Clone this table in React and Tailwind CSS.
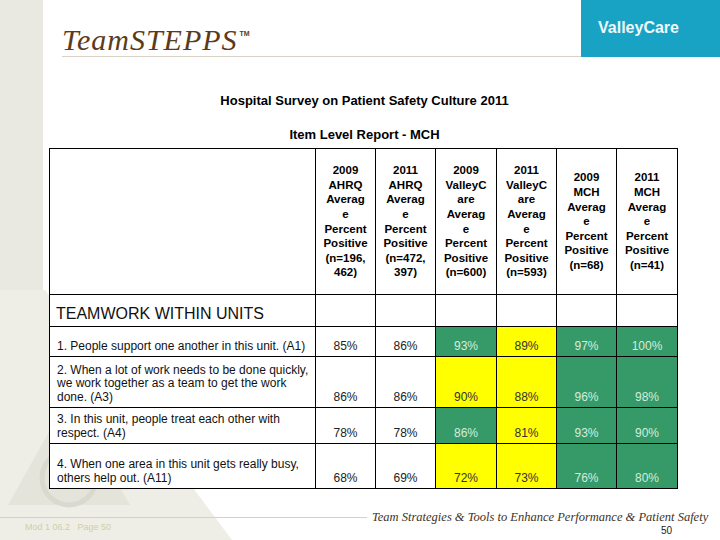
import React from 'react'

const heads = [
  ['2009', 'AHRQ', 'Averag', 'e', 'Percent', 'Positive', '(n=196,', '462)'],
  ['2011', 'AHRQ', 'Averag', 'e', 'Percent', 'Positive', '(n=472,', '397)'],
  ['2009', 'ValleyC', 'are', 'Averag', 'e', 'Percent', 'Positive', '(n=600)'],
  ['2011', 'ValleyC', 'are', 'Averag', 'e', 'Percent', 'Positive', '(n=593)'],
  ['2009', 'MCH', 'Averag', 'e', 'Percent', 'Positive', '(n=68)'],
  ['2011', 'MCH', 'Averag', 'e', 'Percent', 'Positive', '(n=41)'],
]

// w = white, g = green, y = yellow
const rows = [
  {
    h: 'h-[30px]',
    label: ['1. People support one another in this unit. (A1)'],
    vals: [['85%', 'w'], ['86%', 'w'], ['93%', 'g'], ['89%', 'y'], ['97%', 'g'], ['100%', 'g']],
  },
  {
    h: 'h-[51px]',
    label: ['2. When a lot of work needs to be done quickly,', 'we work together as a team to get the work', 'done. (A3)'],
    vals: [['86%', 'w'], ['86%', 'w'], ['90%', 'y'], ['88%', 'y'], ['96%', 'g'], ['98%', 'g']],
  },
  {
    h: 'h-[36px]',
    label: ['3. In this unit, people treat each other with', 'respect. (A4)'],
    vals: [['78%', 'w'], ['78%', 'w'], ['86%', 'g'], ['81%', 'y'], ['93%', 'g'], ['90%', 'g']],
  },
  {
    h: 'h-[45px]',
    label: ['4. When one area in this unit gets really busy,', 'others help out. (A11)'],
    vals: [['68%', 'w'], ['69%', 'w'], ['72%', 'y'], ['73%', 'y'], ['76%', 'g'], ['80%', 'g']],
  },
]

const cellTone = {
  w: 'bg-white text-[#222]',
  g: 'bg-[#359a68] text-[#d6ecdc]',
  y: 'bg-[#ffff00] text-[#333]',
}

function Backdrop() {
  return (
    <svg className="absolute inset-0" width="720" height="540" viewBox="0 0 720 540">
      <rect x="0" y="0" width="43" height="540" fill="#e9e9e1" />
      <polygon points="0,290 45,290 232,540 0,540" fill="#eeeee7" />
      <polygon points="68,398 8,505 130,505" fill="#e4e4db" />
      <circle cx="69" cy="478" r="27" fill="none" stroke="#d9d9d0" strokeWidth="5" />
      <rect x="57" y="440" width="24" height="14" fill="none" stroke="#d9d9d0" strokeWidth="1.5" />
    </svg>
  )
}

const App = () => {
  return (
    <div className="relative w-[720px] h-[540px] overflow-hidden bg-white font-['Liberation_Sans',Arial,sans-serif]">
      <Backdrop />

      <div className="relative flex flex-col">
        {/* header band */}
        <div className="flex h-[57px]">
          <div className="ml-[62px] w-[519px] flex items-end pb-[1px] border-b border-[#d9d2c6]">
            <span className="font-['Liberation_Serif',serif] italic text-[30px] leading-none tracking-[1px] text-[#5b3b1c]">
              TeamSTEPPS
            </span>
            <span className="ml-[2px] mb-[16px] text-[7px] font-bold text-[#5b3b1c]">TM</span>
          </div>
          <div className="w-[139px] bg-[#18a3c5] flex items-center pl-[17px] pb-[1px] text-[#eef8fb] font-bold text-[16px]">
            ValleyCare
          </div>
        </div>

        <div className="mt-[36px] h-[16px] leading-[16px] text-center pl-[9px] text-[13px] font-bold text-black">
          Hospital Survey on Patient Safety Culture 2011
        </div>
        <div className="mt-[18px] h-[16px] leading-[16px] text-center pl-[9px] text-[13px] font-bold text-black">
          Item Level Report - MCH
        </div>

        <table className="mt-[5px] ml-[49px] w-[628px] table-fixed border-collapse bg-white">
          <colgroup>
            <col className="w-[266px]" />
            <col className="w-[60px]" />
            <col className="w-[60px]" />
            <col className="w-[61px]" />
            <col className="w-[60px]" />
            <col className="w-[60px]" />
            <col className="w-[61px]" />
          </colgroup>
          <tbody>
            <tr className="h-[146px]">
              <td className="border border-black" />
              {heads.map((lines, i) => (
                <td key={i} className="border border-black text-center align-middle text-[11.5px] leading-[14.6px] font-bold text-black">
                  {lines.map((l, j) => (
                    <div key={j}>{l}</div>
                  ))}
                </td>
              ))}
            </tr>
            <tr className="h-[32px]">
              <td className="border border-black align-bottom pl-[6px] pb-[3px] text-[16px] leading-[18px] text-[#111]">
                TEAMWORK WITHIN UNITS
              </td>
              {heads.map((_, i) => (
                <td key={i} className="border border-black" />
              ))}
            </tr>
            {rows.map((r, i) => (
              <tr key={i} className={r.h}>
                <td className="border border-black align-bottom pl-[7px] pb-[3px] text-[12px] leading-[13.4px] text-[#111]">
                  {r.label.map((l, j) => (
                    <div key={j} className="whitespace-nowrap">{l}</div>
                  ))}
                </td>
                {r.vals.map(([v, t], j) => (
                  <td key={j} className={`border border-black align-bottom text-center pb-[3px] text-[12px] leading-[14px] ${cellTone[t]}`}>
                    {v}
                  </td>
                ))}
              </tr>
            ))}
          </tbody>
        </table>

        {/* footer */}
        <div className="mt-[21px] flex items-center h-[14px]">
          <div className="w-[367px] h-px bg-[#d2d2c8]" />
          <span className="ml-[5px] font-['Liberation_Serif',serif] italic text-[12.5px] text-[#3e3226] whitespace-nowrap">
            Team Strategies &amp; Tools to Enhance Performance &amp; Patient Safety
          </span>
        </div>
        <div className="flex justify-between">
          <span className="pl-[25px] -mt-[2px] text-[9px] leading-[10px] text-[#cfcfa8]">Mod 1 06.2&nbsp;&nbsp;&nbsp;Page 50</span>
          <span className="pr-[48px] mt-[2px] text-[10px] leading-[10px] text-[#222]">50</span>
        </div>
      </div>
    </div>
  )
}

export default App
